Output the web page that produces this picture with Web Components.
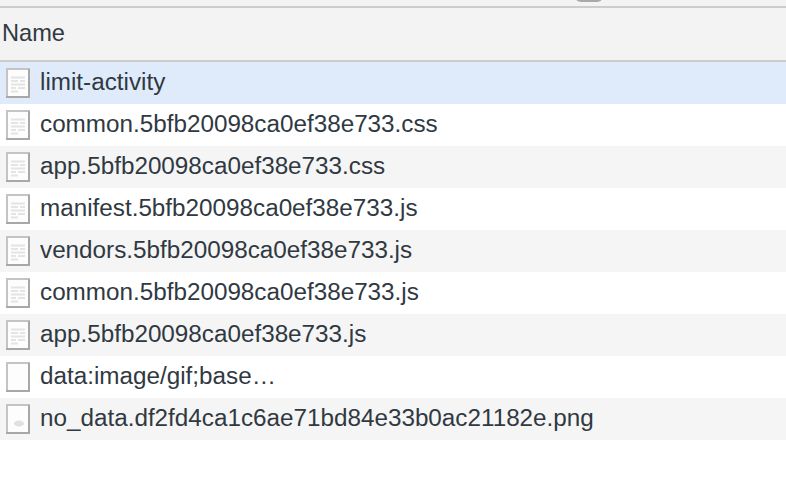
<!DOCTYPE html>
<html><head><meta charset="utf-8"><style>
html,body{margin:0;padding:0;background:#fff}
body{width:786px;height:500px;overflow:hidden;font-family:"Liberation Sans",Arial,sans-serif;color:#303942}
</style></head><body>
<net-panel>
<net-row kind="doc" selected>limit-activity</net-row>
<net-row kind="doc">common.5bfb20098ca0ef38e733.css</net-row>
<net-row kind="doc" alt>app.5bfb20098ca0ef38e733.css</net-row>
<net-row kind="doc">manifest.5bfb20098ca0ef38e733.js</net-row>
<net-row kind="doc" alt>vendors.5bfb20098ca0ef38e733.js</net-row>
<net-row kind="doc">common.5bfb20098ca0ef38e733.js</net-row>
<net-row kind="doc" alt>app.5bfb20098ca0ef38e733.js</net-row>
<net-row kind="blank">data:image/gif;base…</net-row>
<net-row kind="img" alt>no_data.df2fd4ca1c6ae71bd84e33b0ac21182e.png</net-row>
</net-panel>
<script>
class NetPanel extends HTMLElement{constructor(){super();this.attachShadow({mode:'open'}).innerHTML=`<style>
:host{display:block}
.strip{height:6px;background:#f3f3f3;position:relative}
.knob{position:absolute;left:575px;top:-4px;width:28px;height:6px;border-radius:0 0 6px 6px;background:#a9a9a9}
.head{display:flex;align-items:center;padding:0 2px 1px;box-sizing:border-box;background:#f3f3f3;border-top:2px solid #ccc;border-bottom:2px solid #ccc;height:56px;font-size:23.6px;color:#303942}
</style><div class="strip"><div class="knob"></div></div><div class="head">Name</div><slot></slot>`}}
customElements.define('net-panel',NetPanel);
const icons={
doc:`<path d="M5 9.5H19M5 13H12M14 13H19M5 16.5H19M5 20H10M12 20H19M5 23.5H12" stroke="#e4e4e4" stroke-width="2"/>`,
blank:'',
img:`<ellipse cx="13" cy="19.5" rx="5" ry="3" fill="#e0e0e0"/>`
};
class NetRow extends HTMLElement{constructor(){super();this.attachShadow({mode:'open'})}
connectedCallback(){const k=this.getAttribute('kind')||'doc';
this.shadowRoot.innerHTML=`<style>
:host{display:flex;align-items:center;height:42px;gap:10px;padding-left:6px;background:#fff;font-size:24.25px;color:#303942;white-space:nowrap}
:host([alt]){background:#f5f5f5}
:host([selected]){background:#dfebfb}
svg{flex:none;display:block}
span{display:block;margin-top:-2px}
</style><svg width="24" height="30" viewBox="0 0 24 30"><rect x="1" y="1" width="22" height="28" fill="#fdfdfd" stroke="#c4c4c4" stroke-width="2"/><path d="M0 29H23V1" fill="none" stroke="#a8a8a8" stroke-width="2"/>${icons[k]}</svg><span><slot></slot></span>`}}
customElements.define('net-row',NetRow);
</script></body></html>
